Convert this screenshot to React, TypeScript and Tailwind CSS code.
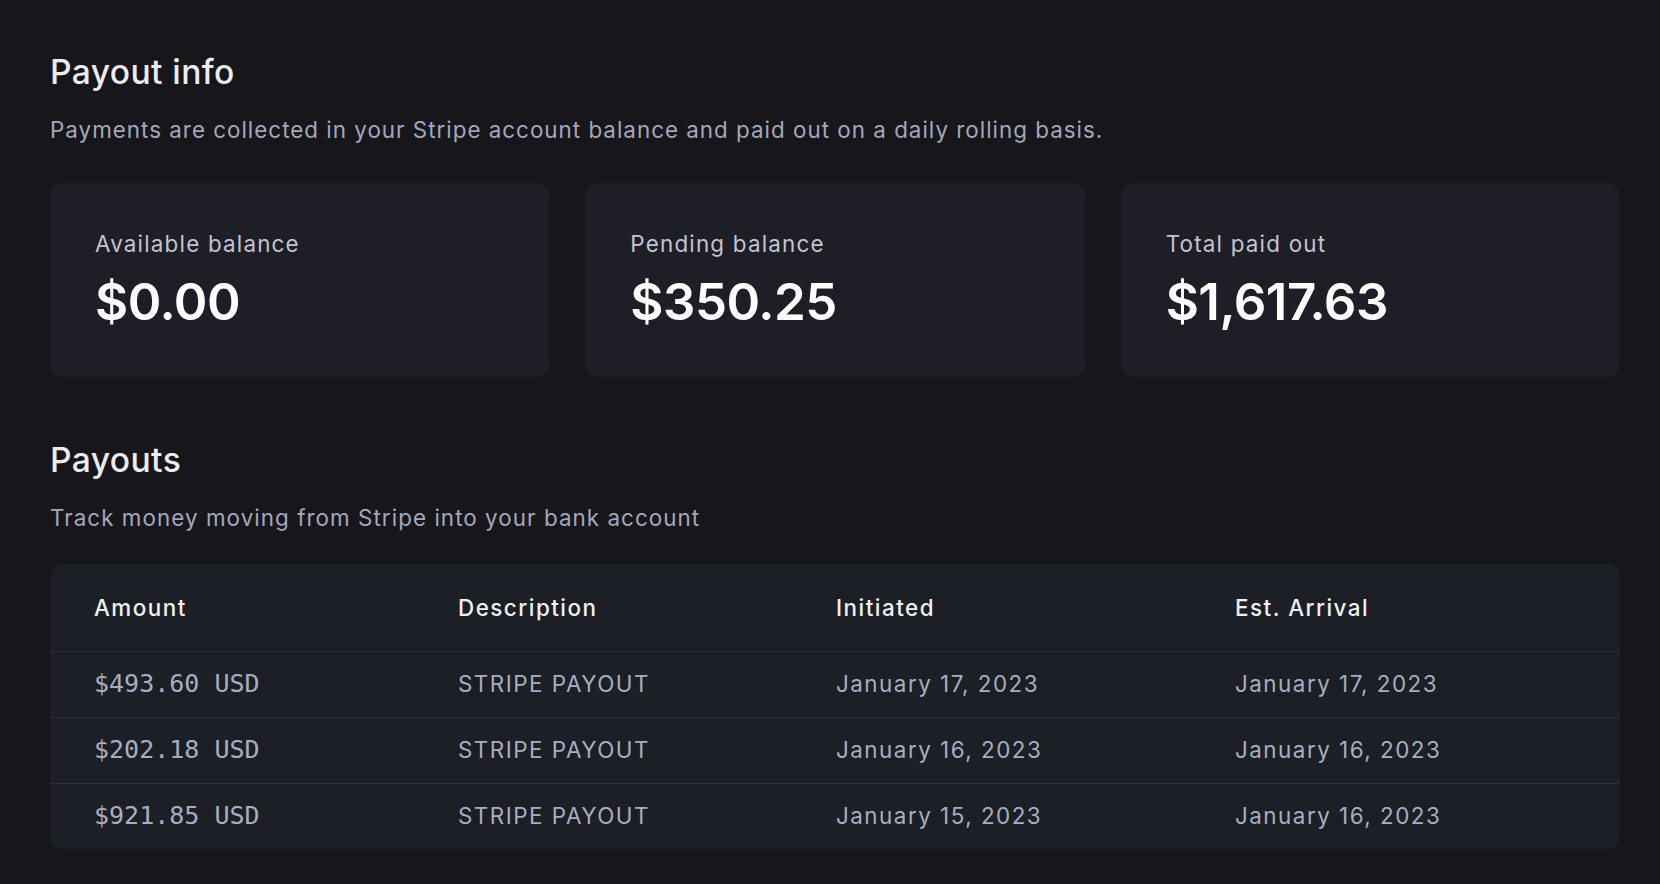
const balances = [
  { label: "Available balance", value: "$0.00" },
  { label: "Pending balance", value: "$350.25" },
  { label: "Total paid out", value: "$1,617.63" },
];

const payouts = [
  { amount: "$493.60 USD", description: "STRIPE PAYOUT", initiated: "January 17, 2023", arrival: "January 17, 2023" },
  { amount: "$202.18 USD", description: "STRIPE PAYOUT", initiated: "January 16, 2023", arrival: "January 16, 2023" },
  { amount: "$921.85 USD", description: "STRIPE PAYOUT", initiated: "January 15, 2023", arrival: "January 16, 2023" },
];

const cols = "grid grid-cols-[364px_378px_399px_1fr] px-[44px]";

export default function App() {
  return (
    <div
      className="min-h-[884px] bg-[#17161b] pt-[52px] pr-[40px] pb-[37px] pl-[50px] text-[22.4px] leading-8 text-[#a4a7bc]"
      style={{ fontFamily: "Inter, 'Noto Sans', sans-serif" }}
    >
      {/* --- payout info --- */}
      <h1 className="text-[33.6px] leading-10 font-medium tracking-[0.4px] text-[#ececf2]">
        Payout info
      </h1>
      <p className="mt-[22px] tracking-[1px]">
        Payments are collected in your Stripe account balance and paid out on a daily rolling basis.
      </p>

      <div className="mt-[37px] grid grid-cols-3 gap-[36px]">
        {balances.map((b) => (
          <div
            key={b.label}
            className="rounded-[13px] bg-[#1e1e26] px-[45px] pt-[45px] pb-[47px]"
          >
            <div className="tracking-[1.2px] text-[#c3c3d3]">{b.label}</div>
            <div className="mt-[14px] text-[51px] leading-[56px] font-semibold tracking-[-0.5px] text-white">
              {b.value}
            </div>
          </div>
        ))}
      </div>

      {/* --- payouts --- */}
      <h2 className="mt-[63px] text-[33.6px] leading-10 font-medium tracking-[0.4px] text-[#ececf2]">
        Payouts
      </h2>
      <p className="mt-[22px] tracking-[1.05px]">Track money moving from Stripe into your bank account</p>

      <div className="mt-[30px] overflow-hidden rounded-[13px] bg-[#1c1f26]">
        <div
          className={`${cols} border-b border-[#2c2f3a] pt-[28px] pb-[27px] font-medium tracking-[1.5px] text-[#eef0f6]`}
        >
          <div>Amount</div>
          <div>Description</div>
          <div>Initiated</div>
          <div>Est. Arrival</div>
        </div>
        {payouts.map((p, i) => (
          <div
            key={p.amount}
            className={`${cols} pt-4 pb-[17px] tracking-[1.5px] text-[#a9adc2] ${
              i < payouts.length - 1 ? "border-b border-[#2c2f3a]" : ""
            }`}
          >
            <div
              className="text-[25px] tracking-normal"
              style={{ fontFamily: "'DejaVu Sans Mono', monospace" }}
            >
              {p.amount}
            </div>
            <div>{p.description}</div>
            <div>{p.initiated}</div>
            <div>{p.arrival}</div>
          </div>
        ))}
      </div>
    </div>
  );
}
